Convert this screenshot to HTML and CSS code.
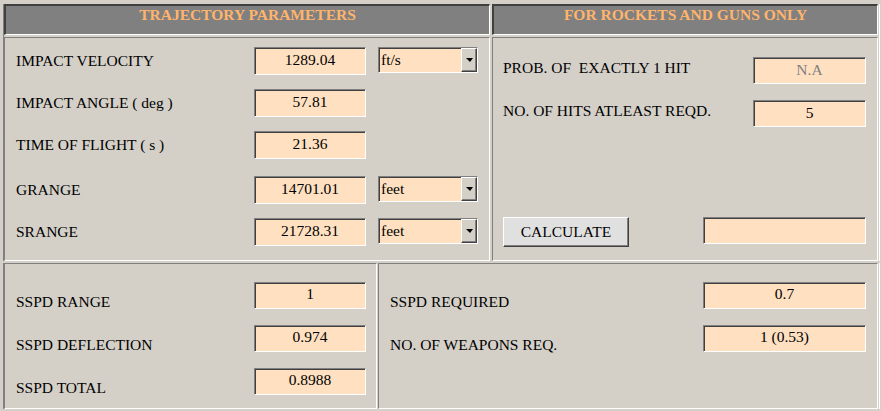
FILE: index.html
```html
<!DOCTYPE html>
<html>
<head>
<meta charset="utf-8">
<title>Trajectory Parameters</title>
<link rel="stylesheet" href="styles.css">
</head>
<body>
<div class="panel top">
  <div class="head">TRAJECTORY PARAMETERS</div>
  <div class="head">FOR ROCKETS AND GUNS ONLY</div>
  <div class="cell traj">
    <div class="row">
      <span class="lbl">IMPACT VELOCITY</span>
      <div class="field">1289.04</div>
      <div class="select"><span>ft/s</span><span class="drop"></span></div>
    </div>
    <div class="row">
      <span class="lbl">IMPACT ANGLE ( deg )</span>
      <div class="field">57.81</div>
    </div>
    <div class="row">
      <span class="lbl">TIME OF FLIGHT ( s )</span>
      <div class="field">21.36</div>
    </div>
    <div class="row extra">
      <span class="lbl">GRANGE</span>
      <div class="field">14701.01</div>
      <div class="select"><span>feet</span><span class="drop"></span></div>
    </div>
    <div class="row">
      <span class="lbl">SRANGE</span>
      <div class="field">21728.31</div>
      <div class="select"><span>feet</span><span class="drop"></span></div>
    </div>
  </div>
  <div class="cell rg">
    <div class="row">
      <span class="lbl">PROB. OF &nbsp;EXACTLY 1 HIT</span>
      <div class="field wide na">N.A</div>
    </div>
    <div class="row">
      <span class="lbl">NO. OF HITS ATLEAST REQD.</span>
      <div class="field wide">5</div>
    </div>
    <div class="row last">
      <button class="btn">CALCULATE</button>
      <div class="field long"></div>
    </div>
  </div>
</div>
<div class="panel bottom">
  <div class="cell sspd">
    <div class="row">
      <span class="lbl">SSPD RANGE</span>
      <div class="field">1</div>
    </div>
    <div class="row">
      <span class="lbl">SSPD DEFLECTION</span>
      <div class="field">0.974</div>
    </div>
    <div class="row">
      <span class="lbl">SSPD TOTAL</span>
      <div class="field">0.8988</div>
    </div>
  </div>
  <div class="cell req">
    <div class="row">
      <span class="lbl">SSPD REQUIRED</span>
      <div class="field long">0.7</div>
    </div>
    <div class="row">
      <span class="lbl">NO. OF WEAPONS REQ.</span>
      <div class="field long">1 (0.53)</div>
    </div>
  </div>
</div>
</body>
</html>
```
FILE: styles.css
```css
* { box-sizing: border-box; }

body {
  margin: 0;
  width: 881px;
  height: 411px;
  overflow: hidden;
  background: #d4d0c8;
  color: #000;
  font-family: "Liberation Serif", "Times New Roman", serif;
  font-size: 15.5px;
}

.panel {
  display: grid;
  margin-left: 3px;
  width: 877px;
  border-left: 1px solid #808080;
  border-right: 1px solid #ffffff;
  gap: 2px;
}

.top {
  margin-top: 4px;
  grid-template-columns: 486px 386px;
  grid-template-rows: 31px 224px;
}

.bottom {
  margin-top: 2px;
  grid-template-columns: 373px 500px;
  column-gap: 1px;
  height: 146px;
}

.head {
  background: #808080;
  border-top: 2px solid #404040;
  border-left: 2px solid #404040;
  border-right: 1px solid #ffffff;
  border-bottom: 1px solid #ffffff;
  color: #ffb46c;
  font-weight: bold;
  text-align: center;
  line-height: 18px;
}

.cell {
  border: 1px solid;
  border-color: #808080 #ffffff #ffffff #808080;
}

.row {
  display: flex;
  align-items: center;
}

.lbl { white-space: nowrap; }

.field {
  width: 112px;
  height: 28px;
  background: #ffe0c0;
  border: 1px solid;
  border-color: #808080 #ffffff #ffffff #808080;
  box-shadow: inset 1px 1px 0 #404040;
  text-align: center;
  line-height: 24px;
  white-space: nowrap;
}

.field.wide { width: 113px; height: 27px; line-height: 23px; }
.field.long { width: 163px; height: 27px; }
.field.na { color: #808080; }

/* trajectory column */
.traj {
  padding: 9px 0 0 11px;
  display: flex;
  flex-direction: column;
  gap: 14px;
}

.traj .row { height: 28px; }
.traj .row.extra { margin-top: 3px; }
.traj .lbl { width: 238px; }

.select {
  align-self: flex-start;
  width: 100px;
  height: 26px;
  margin-left: 12px;
  display: flex;
  justify-content: space-between;
  background: #ffe0c0;
  border: 1px solid;
  border-color: #808080 #ffffff #ffffff #808080;
  box-shadow: inset 1px 1px 0 #404040;
  padding-left: 2px;
  line-height: 24px;
}

.drop {
  width: 16px;
  height: 24px;
  background: #d4d0c8;
  border: 1px solid;
  border-color: #ffffff #404040 #404040 #ffffff;
  box-shadow: inset -1px -1px 0 #808080;
  display: flex;
  align-items: center;
  justify-content: center;
}

.drop::after {
  content: "";
  width: 0;
  height: 0;
  border-top: 4px solid #000;
  border-left: 4px solid transparent;
  border-right: 3px solid transparent;
  margin-left: 1px;
}

/* rockets & guns column */
.rg {
  padding: 19px 11px 13px 10px;
  display: flex;
  flex-direction: column;
  gap: 16px;
}

.rg .row { height: 27px; }
.rg .lbl { width: 250px; margin-bottom: 6px; }

.rg .row.last {
  margin-top: auto;
  height: 30px;
  align-items: flex-start;
  justify-content: space-between;
}

.btn {
  width: 126px;
  height: 30px;
  padding: 0;
  background: #e0e0e0;
  border: 1px solid;
  border-color: #ffffff #404040 #404040 #ffffff;
  box-shadow: inset -1px -1px 0 #808080;
  font-family: inherit;
  font-size: 15.5px;
  color: #000;
  line-height: 26px;
}

/* SSPD section */
.sspd {
  padding: 18px 0 0 11px;
  display: flex;
  flex-direction: column;
  gap: 16px;
}

.req {
  padding: 18px 11px 0 11px;
  display: flex;
  flex-direction: column;
  gap: 16px;
}

.sspd .row, .req .row { height: 27px; }
.sspd .lbl { width: 238px; margin-top: 13px; }
.req .lbl { flex: 1; margin-top: 13px; }

.sspd .field, .req .field {
  height: 27px;
  line-height: 22px;
}
```
